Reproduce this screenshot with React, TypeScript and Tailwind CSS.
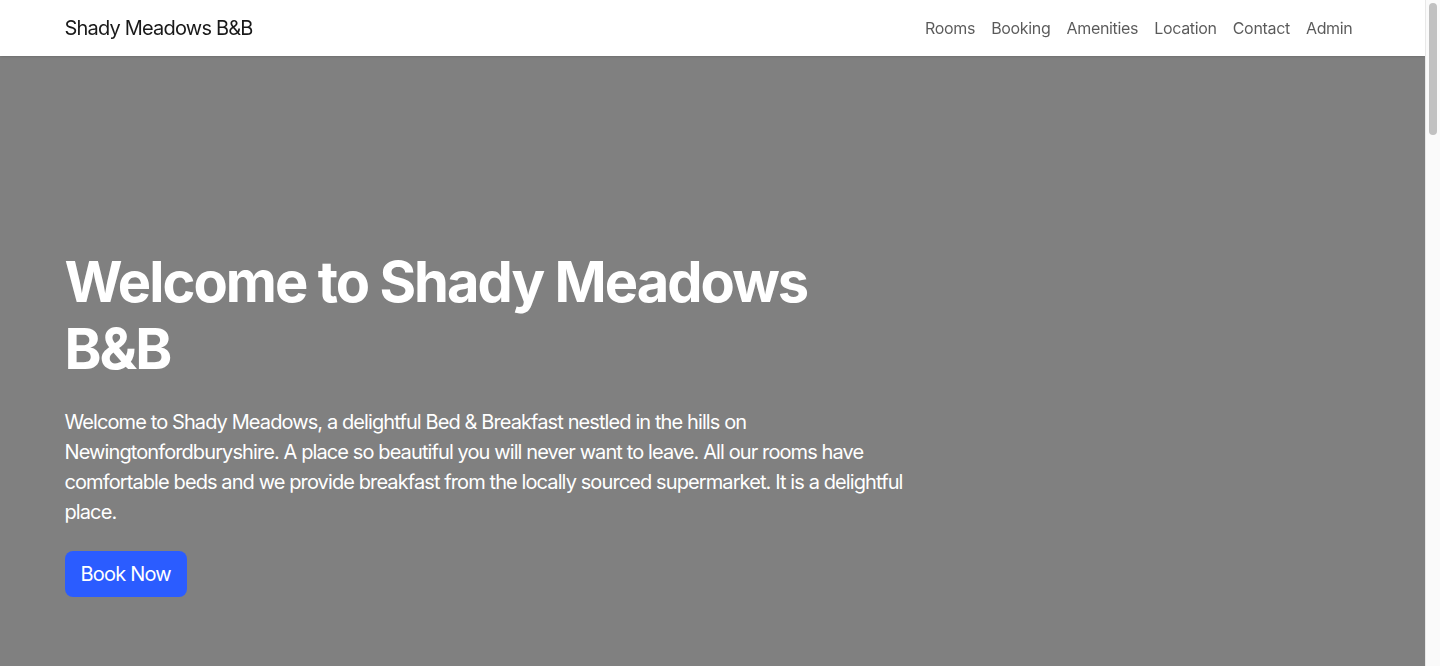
const navLinks = ['Rooms', 'Booking', 'Amenities', 'Location', 'Contact', 'Admin'];

const Navbar = () => {
  return (
    <nav className="sticky top-0 z-10 bg-white shadow-sm">
      <div className="mx-auto flex h-14 max-w-[1320px] items-center justify-between px-3">
        <a href="#" className="text-[20px] leading-[30px] tracking-[-0.04em] text-black/90">
          Shady Meadows B&amp;B
        </a>
        <ul className="flex items-center">
          {navLinks.map((link) => (
            <li key={link}>
              <a href="#" className="block px-2 py-2 text-base leading-6 tracking-[-0.02em] text-black/65">
                {link}
              </a>
            </li>
          ))}
        </ul>
      </div>
    </nav>
  );
};

const Hero = () => {
  return (
    <section className="bg-[#808080] pt-[193px] pb-[193px] text-white">
      <div className="mx-auto max-w-[1320px] px-3">
        <div className="w-[856px]">
          <h1 className="mb-6 text-[56px] leading-[1.2] font-bold tracking-[-0.035em]">
            Welcome to Shady Meadows B&amp;B
          </h1>
          <p className="mb-6 text-[20px] leading-[30px] tracking-[-0.045em]">
            Welcome to Shady Meadows, a delightful Bed &amp; Breakfast nestled in the hills on
            Newingtonfordburyshire. A place so beautiful you will never want to leave. All our rooms
            have comfortable beds and we provide breakfast from the locally sourced supermarket. It
            is a delightful place.
          </p>
          <a
            href="#"
            className="inline-block rounded-lg bg-[#2b5cff] px-4 py-2 text-[20px] leading-[30px] tracking-[-0.04em] text-white"
          >
            Book Now
          </a>
        </div>
      </div>
    </section>
  );
};

// browser scrollbar, drawn since the headless shot hides the real one
const Scrollbar = () => {
  return (
    <div className="w-[15px] shrink-0 border-l border-[#e8e8e8] bg-[#fafafa] px-[3px] pt-[3px]">
      <div className="h-[132px] w-2 rounded-full bg-[#c1c1c1]" />
    </div>
  );
};

const App = () => {
  return (
    <div className="flex h-screen bg-white font-['Inter',sans-serif]">
      <main className="min-w-0 flex-1 overflow-y-auto">
        <Navbar />
        <Hero />
      </main>
      <Scrollbar />
    </div>
  );
};

export default App;
